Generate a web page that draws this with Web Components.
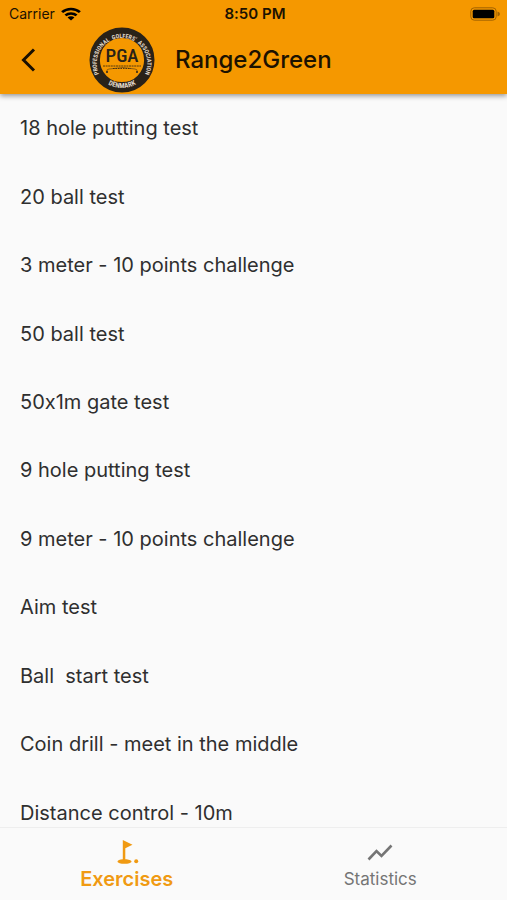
<!DOCTYPE html>
<html lang="en">
<head>
<meta charset="utf-8">
<meta name="viewport" content="width=device-width, initial-scale=1">
<title>Range2Green</title>
<style>
  html, body { margin: 0; height: 100%; background: #fafafa; }
  body { font-family: Inter, Roboto, "Liberation Sans", sans-serif; font-feature-settings: "calt" 0; color: #2f2f2f; }
</style>
</head>
<body>
<golf-app></golf-app>

<template id="status-bar">
  <style>
    :host { display: grid; grid-template-columns: 1fr auto 1fr; align-items: center; height: 27px; padding: 0 6px 0 9px; line-height: 16px; color: #1c1200; }
    .carrier { display: flex; align-items: center; gap: 6px; font-size: 14px; }
    .time { font-size: 15px; font-weight: 600; }
    .battery { justify-self: end; }
    svg { display: block; }
  </style>
  <span class="carrier">Carrier
    <svg width="20" height="14" viewBox="0 0 18 14" preserveAspectRatio="none" fill="none" stroke="#000" stroke-width="2.5" aria-label="Wi-Fi">
      <path d="M1 5.2a11.5 11.5 0 0 1 16 0M4 8.4a7.2 7.2 0 0 1 10 0"/>
      <path d="M9 13.6L5.9 10.6a4.4 4.4 0 0 1 6.2 0z" fill="#000" stroke="none"/>
    </svg>
  </span>
  <span class="time">8:50 PM</span>
  <svg class="battery" width="31" height="14" viewBox="0 0 31 14" aria-label="Battery full">
    <rect x=".8" y=".8" width="25.4" height="12.4" rx="3.5" fill="none" stroke="#a26300" stroke-width="1"/>
    <rect x="2.7" y="2.7" width="21.6" height="8.6" rx="1.5" fill="#000"/>
    <path d="M27.5 4.5v5q2.5-.8 2.5-2.5t-2.5-2.5z" fill="#a26300"/>
  </svg>
</template>

<template id="club-logo">
  <style>
    :host { display: block; }
    svg { display: block; }
    .ring { font-family: "Roboto Condensed", "Liberation Sans Narrow", "Liberation Sans", sans-serif; font-weight: 700; font-size: 6px; fill: #e0d8c8; }
    .large { font-size: 7px; }
    .name { font-family: "Roboto Condensed", Roboto, sans-serif; font-size: 19px; font-weight: 500; fill: #292218; }
  </style>
  <svg width="66" height="66" viewBox="0 0 66 66" role="img" aria-label="Professional Golfers' Association Denmark">
    <defs>
      <path id="top" d="M10.1 47A25.3 25.3 0 1 1 55.9 47"/>
      <path id="bottom" d="M6 43A29.3 29.3 0 0 0 60 43"/>
    </defs>
    <circle cx="33" cy="33" r="27.3" fill="none" stroke="#292218" stroke-width="10.4"/>
    <text class="ring"><textPath href="#top">PROFESSIONAL</textPath></text>
    <text class="ring" text-anchor="middle"><textPath href="#top" startOffset="52%">GOLFERS'</textPath></text>
    <text class="ring" text-anchor="end"><textPath href="#top" startOffset="100%">ASSOCIATION</textPath></text>
    <text class="ring large" text-anchor="middle"><textPath href="#bottom" startOffset="50%">DENMARK</textPath></text>
    <text class="name" x="33" y="35" text-anchor="middle">PGA</text>
    <g fill="none" stroke="#292218" stroke-width=".8">
      <path d="M14 39h38" stroke-dasharray="2 .6"/>
      <path d="M18 44.5q-1-2 2-2.5l14-1.5 12 1.5q3 .5 2 2.5" opacity=".6"/>
      <path d="M24 41.5h18" stroke-dasharray="1.5 1"/>
      <path d="M17 45h2M47 45h2" stroke-width="1.6"/>
    </g>
  </svg>
</template>

<template id="app-header">
  <style>
    :host { display: block; background: #f59800; box-shadow: 0 2px 5px rgba(0,0,0,.4); position: relative; z-index: 1; padding-bottom: 1px; }
    .bar { display: flex; align-items: center; height: 66px; padding-left: 14px; }
    button { width: 28px; height: 44px; padding: 0; border: 0; background: none; cursor: pointer; }
    button svg { display: block; margin: auto; }
    club-logo { margin-left: 47px; }
    h1 { margin: 0 0 0 20px; font-size: 24px; line-height: 32px; font-weight: 500; color: #1c1200; }
  </style>
  <status-bar></status-bar>
  <div class="bar">
    <button type="button" aria-label="Back">
      <svg width="16" height="26" viewBox="0 0 16 26" fill="none" stroke="#1a1000" stroke-width="3"><path d="M14 2.5L3.5 13 14 23.5"/></svg>
    </button>
    <club-logo></club-logo>
    <h1><slot></slot></h1>
  </div>
</template>

<template id="exercise-item">
  <style>
    :host { display: flex; align-items: center; padding: 0 20px; font-size: 20px; line-height: 24px; }
    a { color: inherit; text-decoration: none; white-space: pre; }
  </style>
  <a href="#"><slot></slot></a>
</template>

<template id="nav-tab">
  <style>
    :host { display: block; color: #757575; }
    button { display: flex; flex-direction: column; align-items: center; width: 100%; padding: 11px 0 10px; gap: 3px; border: 0; background: none; color: inherit; font: 400 17px/22px Inter, sans-serif; cursor: pointer; }
    :host([active]) { color: #f09a12; }
    :host([active]) button { font-size: 20px; font-weight: 600; }
    ::slotted(svg) { display: block; }
  </style>
  <button type="button"><slot name="icon"></slot><slot></slot></button>
</template>

<template id="golf-app">
  <style>
    :host { display: flex; flex-direction: column; height: 100vh; overflow: hidden; }
    main { flex: 1; min-height: 0; display: flex; overflow: hidden; }
    .list { flex: 1; display: grid; grid-auto-rows: minmax(56px, 1fr); margin-bottom: -20px; }
    nav { display: grid; grid-template-columns: 1fr 1fr; background: #fafafa; border-top: 1px solid #eee; }
  </style>
  <app-header>Range2Green</app-header>
  <main>
    <div class="list" role="list">
      <exercise-item role="listitem">18 hole putting test</exercise-item>
      <exercise-item role="listitem">20 ball test</exercise-item>
      <exercise-item role="listitem">3 meter - 10 points challenge</exercise-item>
      <exercise-item role="listitem">50 ball test</exercise-item>
      <exercise-item role="listitem">50x1m gate test</exercise-item>
      <exercise-item role="listitem">9 hole putting test</exercise-item>
      <exercise-item role="listitem">9 meter - 10 points challenge</exercise-item>
      <exercise-item role="listitem">Aim test</exercise-item>
      <exercise-item role="listitem">Ball  start test</exercise-item>
      <exercise-item role="listitem">Coin drill - meet in the middle</exercise-item>
      <exercise-item role="listitem">Distance control - 10m</exercise-item>
    </div>
  </main>
  <nav>
    <nav-tab active>
      <svg slot="icon" width="26" height="26" viewBox="-3 -1 26 26" fill="currentColor"><path d="M5.8 0L15.5 4.7 8.3 8.2V19.2c3.2.2 6.2 1 6.2 2.3 0 1.4-3.4 2.3-7 2.3S.5 22.9.5 21.5c0-1.2 2.3-2 5.3-2.2z"/><circle cx="19.2" cy="21.3" r="2"/></svg>
      Exercises
    </nav-tab>
    <nav-tab>
      <svg slot="icon" width="28" height="26" viewBox="0 0 28 26" fill="none" stroke="currentColor" stroke-width="2.6"><path d="M2.5 20.5l8-8.5 5 5L25.5 6.5"/></svg>
      Statistics
    </nav-tab>
  </nav>
</template>

<script>
  for (const name of ["status-bar", "club-logo", "app-header", "exercise-item", "nav-tab", "golf-app"]) {
    customElements.define(name, class extends HTMLElement {
      constructor() {
        super();
        this.attachShadow({ mode: "open" }).append(document.getElementById(name).content.cloneNode(true));
      }
    });
  }
</script>
</body>
</html>
